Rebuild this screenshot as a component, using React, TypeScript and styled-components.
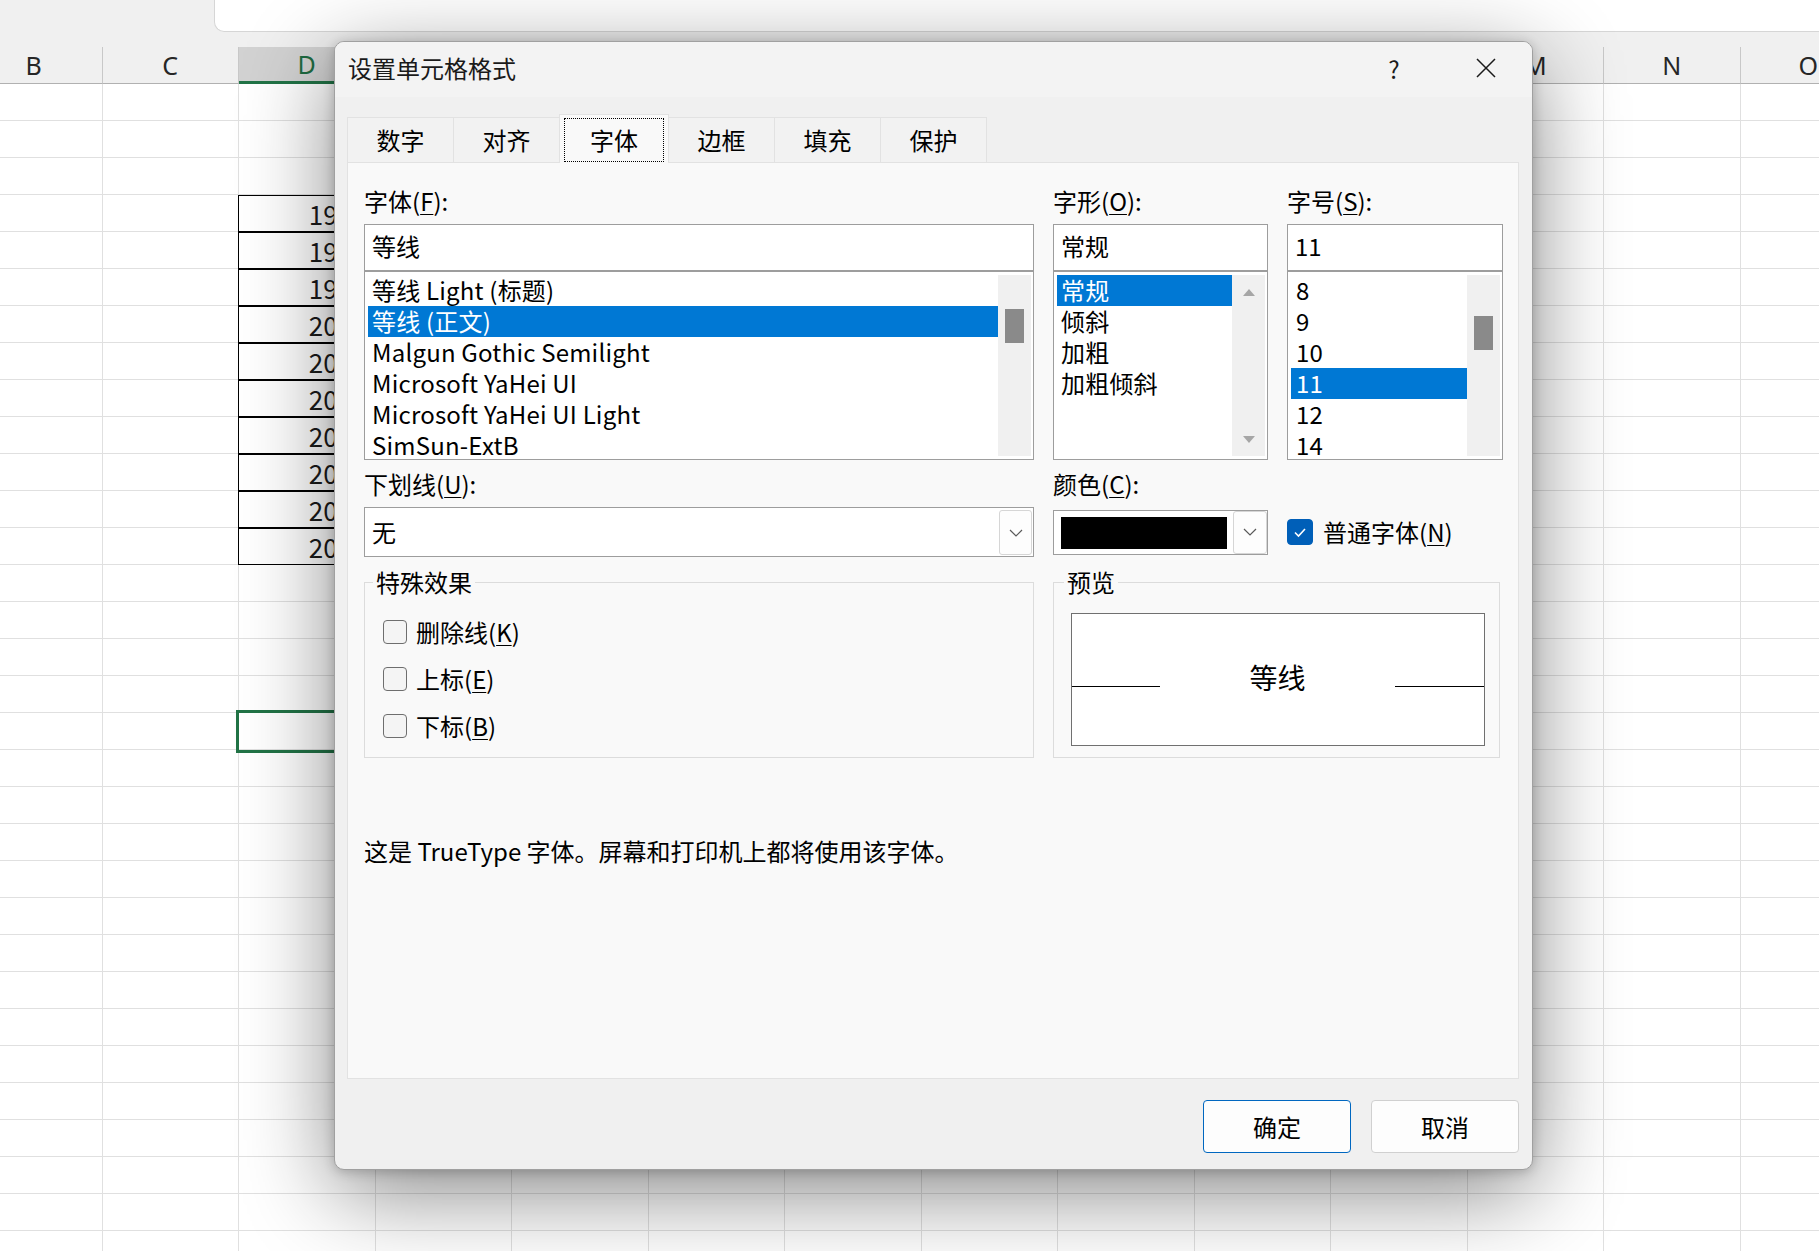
import React from 'react';
import styled, { createGlobalStyle } from 'styled-components';

const GlobalStyle = createGlobalStyle`
  * { box-sizing: border-box; }
  html, body { margin: 0; padding: 0; }
  body {
    width: 1819px;
    height: 1251px;
    overflow: hidden;
    background: #ffffff;
    color: #000000;
    font-family: "Noto Sans CJK SC", "Noto Sans", sans-serif;
  }
`;

const COLUMNS = ['B', 'C', 'D', 'E', 'F', 'G', 'H', 'I', 'J', 'K', 'L', 'M', 'N', 'O'];
const ROW_COUNT = 32;
const SELECTED_ROW = 18;
const DATA: { [row: number]: string } = {
  4: '1997', 5: '1998', 6: '1999', 7: '2000', 8: '2001',
  9: '2002', 10: '2003', 11: '2004', 12: '2005', 13: '2006',
};

const TABS = ['数字', '对齐', '字体', '边框', '填充', '保护'];
const FONTS = ['等线 Light (标题)', '等线 (正文)', 'Malgun Gothic Semilight', 'Microsoft YaHei UI', 'Microsoft YaHei UI Light', 'SimSun-ExtB'];
const STYLES = ['常规', '倾斜', '加粗', '加粗倾斜'];
const SIZES = ['8', '9', '10', '11', '12', '14'];

/* ---------- sheet behind the dialog ---------- */

const Page = styled.div`
  position: relative;
  width: 1819px;
  height: 1251px;
  overflow: hidden;
  background: #ffffff;
`;

const TopBar = styled.div`
  height: 47px;
  background: #f0f0f0;
  padding-left: 214px;
`;

const FormulaBox = styled.div`
  height: 32px;
  background: #ffffff;
  border-left: 1px solid #d6d6d6;
  border-bottom: 1px solid #d6d6d6;
  border-bottom-left-radius: 10px;
`;

const HeaderRow = styled.div`
  display: flex;
  height: 37px;
  margin-left: -34px;
  background: #f0f0f0;
`;

const HeaderCell = styled.div<{ $active: boolean }>`
  flex: 0 0 136.5px;
  display: flex;
  align-items: center;
  justify-content: center;
  border-right: 1px solid #c8c8c8;
  border-bottom: ${p => (p.$active ? '3px solid #217346' : '1px solid #b1b1b1')};
  background: ${p => (p.$active ? '#d2d2d2' : '#f0f0f0')};
  color: ${p => (p.$active ? '#1e6b41' : '#262626')};
  font-family: "Noto Sans", sans-serif;
  font-size: 25px;
  line-height: 1;
`;

const SheetRow = styled.div`
  display: flex;
  height: 37px;
  margin-left: -34px;
`;

const Cell = styled.div<{ $boxed: boolean; $selected: boolean }>`
  position: relative;
  flex: 0 0 136.5px;
  display: flex;
  align-items: center;
  justify-content: flex-end;
  padding-right: 8px;
  border-right: 1px solid ${p => (p.$boxed ? '#000000' : '#e0e0e0')};
  border-bottom: 1px solid ${p => (p.$boxed ? '#000000' : '#e0e0e0')};
  box-shadow: ${p => (p.$boxed ? '-1px 0 0 #000000, inset 0 1px 0 #000000' : 'none')};
  outline: ${p => (p.$selected ? '3px solid #217346' : 'none')};
  outline-offset: 0px;
  z-index: ${p => (p.$selected || p.$boxed ? 1 : 0)};
  font-size: 26px;
  color: #1a1a1a;
`;

/* ---------- dialog ---------- */

const Dialog = styled.div`
  position: absolute;
  left: 334px;
  top: 41px;
  width: 1199px;
  height: 1129px;
  display: flex;
  flex-direction: column;
  background: #f0f0f0;
  border: 1px solid #a0a0a0;
  border-radius: 10px;
  box-shadow: 0 22px 90px rgba(0, 0, 0, 0.48), 0 2px 12px rgba(0, 0, 0, 0.2);
  overflow: hidden;
  z-index: 2;
`;

const TitleBar = styled.div`
  flex: none;
  display: flex;
  align-items: center;
  height: 55px;
  padding-left: 13px;
  padding-bottom: 3px;
  background: #f3f3f3;
`;

const Title = styled.div`
  flex: 1;
  font-size: 24px;
  line-height: 30px;
  color: #1a1a1a;
`;

const TitleButton = styled.div`
  width: 92px;
  height: 52px;
  display: flex;
  align-items: center;
  justify-content: center;
  font-size: 24px;
  color: #1a1a1a;
`;

const Body = styled.div`
  flex: 1;
  display: flex;
  flex-direction: column;
  padding: 17px 13px 0 12px;
`;

const TabRow = styled.div`
  display: flex;
  align-items: flex-end;
  height: 48px;
`;

const Tab = styled.div<{ $active?: boolean }>`
  position: relative;
  z-index: ${p => (p.$active ? 1 : 0)};
  flex: none;
  width: ${p => (p.$active ? 110 : 107)}px;
  height: ${p => (p.$active ? 49 : 45)}px;
  margin-right: -1px;
  margin-bottom: ${p => (p.$active ? -1 : 0)}px;
  padding: ${p => (p.$active ? '3px 4px 1px' : '0 0 2px')};
  border: 1px solid #e2e2e2;
  border-bottom: none;
  background: ${p => (p.$active ? '#f9f9f9' : '#f2f2f2')};
  font-size: 24px;
  display: flex;
  align-items: center;
  justify-content: center;
`;

const FocusRect = styled.div`
  flex: 1;
  align-self: stretch;
  display: flex;
  align-items: center;
  justify-content: center;
  padding-bottom: 2px;
  border: 1px dotted #000000;
`;

const Panel = styled.div`
  flex: none;
  height: 917px;
  padding: 23px 15px 0 16px;
  background: #f9f9f9;
  border: 1px solid #e2e2e2;
`;

const FontGrid = styled.div`
  display: grid;
  grid-template-columns: 670px 215px 216px;
  column-gap: 19px;
`;

const Field = styled.div`
  display: flex;
  flex-direction: column;
  gap: 8px;
`;

const Label = styled.div`
  height: 30px;
  font-size: 24px;
  line-height: 30px;
  white-space: nowrap;
`;

const Key = styled.span`
  text-decoration: underline;
  text-underline-offset: 3px;
  text-decoration-thickness: 1px;
`;

const TextBox = styled.div`
  height: 47px;
  padding: 0 0 3px 7px;
  border: 1px solid #9d9d9d;
  background: #ffffff;
  font-size: 24px;
  line-height: 42px;
`;

const Stack = styled.div`
  display: flex;
  flex-direction: column;
`;

const ListBox = styled.div`
  display: flex;
  height: 189px;
  padding: 3px 2px 3px 3px;
  border: 1px solid #9d9d9d;
  background: #ffffff;
`;

const ListItems = styled.div`
  flex: 1;
  min-width: 0;
  overflow: hidden;
`;

const ListItem = styled.div<{ $selected?: boolean; $indent?: number }>`
  height: 31px;
  padding-left: ${p => p.$indent ?? 4}px;
  font-size: 24px;
  line-height: 30px;
  letter-spacing: 0.2px;
  white-space: nowrap;
  background: ${p => (p.$selected ? '#0078d4' : 'transparent')};
  color: ${p => (p.$selected ? '#ffffff' : '#000000')};
`;

const ScrollTrack = styled.div<{ $arrows?: boolean }>`
  flex: 0 0 33px;
  display: flex;
  flex-direction: column;
  align-items: center;
  justify-content: ${p => (p.$arrows ? 'space-between' : 'flex-start')};
  padding: ${p => (p.$arrows ? '14px 0 13px' : '0')};
  background: #f0f0f0;
`;

const Thumb = styled.div<{ $top: number }>`
  width: 19px;
  height: 34px;
  margin-top: ${p => p.$top}px;
  background: #8a8a8a;
`;

const OptionsGrid = styled.div`
  display: grid;
  grid-template-columns: 670px 215px 216px;
  column-gap: 19px;
  row-gap: 8px;
  align-items: center;
  margin-top: 9px;
`;

const ComboBox = styled.div`
  display: flex;
  align-items: stretch;
  height: 50px;
  padding: 2px 1px 1px 7px;
  border: 1px solid #9d9d9d;
  background: #ffffff;
`;

const ComboText = styled.div`
  flex: 1;
  font-size: 24px;
  line-height: 44px;
`;

const DropButton = styled.div<{ $width: number }>`
  flex: 0 0 ${p => p.$width}px;
  display: flex;
  align-items: center;
  justify-content: center;
  border: 1px solid #d6d6d6;
  border-radius: 3px;
  background: #fdfdfd;
`;

const ColorCombo = styled.div`
  display: flex;
  align-items: stretch;
  height: 45px;
  border: 1px solid #9d9d9d;
  background: #ffffff;
`;

const Swatch = styled.div`
  flex: 0 0 166px;
  margin: 6px 6px 5px 7px;
  background: #000000;
`;

const CheckRow = styled.div<{ $gap: number }>`
  display: flex;
  align-items: center;
  gap: ${p => p.$gap}px;
  height: 47px;
  font-size: 24px;
  line-height: 30px;
  white-space: nowrap;
`;

const CheckBox = styled.div<{ $checked?: boolean }>`
  flex: none;
  width: ${p => (p.$checked ? 26 : 24)}px;
  height: ${p => (p.$checked ? 26 : 24)}px;
  display: flex;
  align-items: center;
  justify-content: center;
  border-radius: 4px;
  border: 1px solid ${p => (p.$checked ? '#005fb8' : '#6e6e6e')};
  background: ${p => (p.$checked ? '#005fb8' : '#f4f4f4')};
`;

const GroupsGrid = styled.div`
  display: grid;
  grid-template-columns: 670px 447px;
  column-gap: 19px;
  margin-top: 10px;
`;

const Group = styled.fieldset<{ $pad: string }>`
  margin: 0;
  min-width: 0;
  padding: ${p => p.$pad};
  border: 1px solid #dcdcdc;
`;

const Legend = styled.legend<{ $shift: number }>`
  margin-left: ${p => p.$shift}px;
  padding: 0 3px;
  font-size: 24px;
  line-height: 30px;
`;

const PreviewBox = styled.div`
  display: grid;
  grid-template-columns: 88px 1fr 89px;
  align-items: start;
  height: 133px;
  border: 1px solid #707070;
  background: #ffffff;
`;

const PreviewLine = styled.div`
  height: 1px;
  margin-top: 72px;
  background: #000000;
`;

const PreviewText = styled.div`
  margin-top: 43px;
  font-size: 28px;
  line-height: 40px;
  text-align: center;
`;

const Description = styled.div`
  margin-top: 78px;
  font-size: 24px;
  line-height: 30px;
`;

const Footer = styled.div`
  display: flex;
  justify-content: flex-end;
  gap: 20px;
  padding-top: 21px;
`;

const Button = styled.div<{ $primary?: boolean }>`
  width: 148px;
  height: 53px;
  display: flex;
  align-items: center;
  justify-content: center;
  border-radius: 4px;
  border: 1px solid ${p => (p.$primary ? '#0067c0' : '#d0d0d0')};
  background: #fdfdfd;
  font-size: 24px;
`;

/* ---------- drawings ---------- */

const Chevron = () => (
  <svg width="14" height="8" viewBox="0 0 14 8">
    <polyline points="1,1 7,7 13,1" fill="none" stroke="#5a5a5a" strokeWidth="1.2" />
  </svg>
);

const Arrow = ({ down }: { down?: boolean }) => (
  <svg width="12" height="7" viewBox="0 0 12 7">
    <polygon points={down ? '0,0 12,0 6,7' : '0,7 12,7 6,0'} fill="#a6a6a6" />
  </svg>
);

const CloseIcon = () => (
  <svg width="20" height="20" viewBox="0 0 20 20">
    <path d="M1 1 L19 19 M19 1 L1 19" stroke="#1a1a1a" strokeWidth="1.5" fill="none" />
  </svg>
);

const CheckMark = () => (
  <svg width="16" height="16" viewBox="0 0 16 16">
    <path d="M3 8.5 L6.5 12 L13 5" stroke="#ffffff" strokeWidth="1.6" fill="none" />
  </svg>
);

const Sheet = () => (
  <>
    <TopBar><FormulaBox /></TopBar>
    <HeaderRow>
      {COLUMNS.map(c => (
        <HeaderCell key={c} $active={c === 'D'}>{c}</HeaderCell>
      ))}
    </HeaderRow>
    {Array.from({ length: ROW_COUNT }, (_, i) => i + 1).map(row => (
      <SheetRow key={row}>
        {COLUMNS.map(c => {
          const isD = c === 'D';
          return (
            <Cell key={c} $boxed={isD && !!DATA[row]} $selected={isD && row === SELECTED_ROW}>
              {isD ? DATA[row] : null}
            </Cell>
          );
        })}
      </SheetRow>
    ))}
  </>
);

const FormatDialog = () => (
  <Dialog>
    <TitleBar>
      <Title>设置单元格格式</Title>
      <TitleButton>?</TitleButton>
      <TitleButton><CloseIcon /></TitleButton>
    </TitleBar>
    <Body>
      <TabRow>
        {TABS.map(t => (
          t === '字体'
            ? <Tab key={t} $active><FocusRect>{t}</FocusRect></Tab>
            : <Tab key={t}>{t}</Tab>
        ))}
      </TabRow>
      <Panel>
        <FontGrid>
          <Field>
            <Label>字体(<Key>F</Key>):</Label>
            <Stack>
              <TextBox>等线</TextBox>
              <ListBox>
                <ListItems>
                  {FONTS.map((f, i) => <ListItem key={f} $selected={i === 1}>{f}</ListItem>)}
                </ListItems>
                <ScrollTrack><Thumb $top={34} /></ScrollTrack>
              </ListBox>
            </Stack>
          </Field>
          <Field>
            <Label>字形(<Key>O</Key>):</Label>
            <Stack>
              <TextBox>常规</TextBox>
              <ListBox>
                <ListItems>
                  {STYLES.map((s, i) => <ListItem key={s} $indent={4} $selected={i === 0}>{s}</ListItem>)}
                </ListItems>
                <ScrollTrack $arrows><Arrow /><Arrow down /></ScrollTrack>
              </ListBox>
            </Stack>
          </Field>
          <Field>
            <Label>字号(<Key>S</Key>):</Label>
            <Stack>
              <TextBox>11</TextBox>
              <ListBox>
                <ListItems>
                  {SIZES.map(s => <ListItem key={s} $indent={5} $selected={s === '11'}>{s}</ListItem>)}
                </ListItems>
                <ScrollTrack><Thumb $top={41} /></ScrollTrack>
              </ListBox>
            </Stack>
          </Field>
        </FontGrid>

        <OptionsGrid>
          <Label>下划线(<Key>U</Key>):</Label>
          <Label>颜色(<Key>C</Key>):</Label>
          <div />
          <ComboBox>
            <ComboText>无</ComboText>
            <DropButton $width={33}><Chevron /></DropButton>
          </ComboBox>
          <ColorCombo>
            <Swatch />
            <DropButton $width={34}><Chevron /></DropButton>
          </ColorCombo>
          <CheckRow $gap={10}>
            <CheckBox $checked><CheckMark /></CheckBox>
            <span>普通字体(<Key>N</Key>)</span>
          </CheckRow>
        </OptionsGrid>

        <GroupsGrid>
          <Group $pad="11px 0 8px 18px">
            <Legend $shift={-10}>特殊效果</Legend>
            <CheckRow $gap={9}><CheckBox /><span>删除线(<Key>K</Key>)</span></CheckRow>
            <CheckRow $gap={9}><CheckBox /><span>上标(<Key>E</Key>)</span></CheckRow>
            <CheckRow $gap={9}><CheckBox /><span>下标(<Key>B</Key>)</span></CheckRow>
          </Group>
          <Group $pad="16px 14px 11px 17px">
            <Legend $shift={-7}>预览</Legend>
            <PreviewBox>
              <PreviewLine />
              <PreviewText>等线</PreviewText>
              <PreviewLine />
            </PreviewBox>
          </Group>
        </GroupsGrid>

        <Description>这是 TrueType 字体。屏幕和打印机上都将使用该字体。</Description>
      </Panel>
      <Footer>
        <Button $primary>确定</Button>
        <Button>取消</Button>
      </Footer>
    </Body>
  </Dialog>
);

export default function App() {
  return (
    <Page>
      <GlobalStyle />
      <Sheet />
      <FormatDialog />
    </Page>
  );
}
